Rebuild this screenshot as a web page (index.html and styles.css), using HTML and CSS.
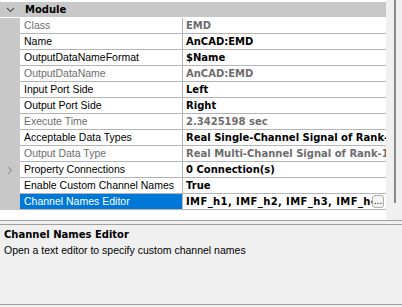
FILE: index.html
```html
<!DOCTYPE html>
<html>
<head>
<meta charset="utf-8">
<link rel="stylesheet" href="styles.css">
</head>
<body>
<div class="pg">
  <div class="top">
    <div class="grid">
      <div class="cat">
        <span class="margin"><svg class="chev" width="9" height="6" viewBox="0 0 9 6"><path d="M1 1 L4.5 4.5 L8 1" fill="none" stroke="#5a5a5a" stroke-width="1.2"/></svg></span>
        <span class="catname">Module</span>
      </div>
      <div class="row"><span class="margin"></span><span class="name dis">Class</span><span class="val dis">EMD</span></div>
      <div class="row"><span class="margin"></span><span class="name">Name</span><span class="val">AnCAD:EMD</span></div>
      <div class="row"><span class="margin"></span><span class="name">OutputDataNameFormat</span><span class="val">$Name</span></div>
      <div class="row"><span class="margin"></span><span class="name dis">OutputDataName</span><span class="val dis">AnCAD:EMD</span></div>
      <div class="row"><span class="margin"></span><span class="name">Input Port Side</span><span class="val">Left</span></div>
      <div class="row"><span class="margin"></span><span class="name">Output Port Side</span><span class="val">Right</span></div>
      <div class="row"><span class="margin"></span><span class="name dis">Execute Time</span><span class="val dis">2.3425198 sec</span></div>
      <div class="row"><span class="margin"></span><span class="name">Acceptable Data Types</span><span class="val">Real Single-Channel Signal of Rank-1</span></div>
      <div class="row"><span class="margin"></span><span class="name dis">Output Data Type</span><span class="val dis">Real Multi-Channel Signal of Rank-1</span></div>
      <div class="row"><span class="margin"><svg class="chev" width="6" height="9" viewBox="0 0 6 9"><path d="M1 1 L4.5 4.5 L1 8" fill="none" stroke="#9a9a9a" stroke-width="1.2"/></svg></span><span class="name">Property Connections</span><span class="val">0 Connection(s)</span></div>
      <div class="row"><span class="margin"></span><span class="name">Enable Custom Channel Names</span><span class="val">True</span></div>
      <div class="row"><span class="margin"></span><span class="name sel">Channel Names Editor</span><span class="val"><span class="clip">IMF_h1, IMF_h2, IMF_h3, IMF_h4, IMF_h5</span><span class="dots">...</span></span></div>
    </div>
    <div class="vscroll"><div class="thumb"></div></div>
  </div>
  <div class="split"></div>
  <div class="desc">
    <div class="dtitle">Channel Names Editor</div>
    <div class="dtext">Open a text editor to specify custom channel names</div>
  </div>
</div>
</body>
</html>
```
FILE: styles.css
```css
html, body {
  margin: 0;
  padding: 0;
}
body {
  width: 402px;
  height: 307px;
  overflow: hidden;
  background: #f0f0f0;
  font-family: "Liberation Sans", Arial, sans-serif;
  font-size: 10.5px;
  color: #000;
}
.pg {
  display: flex;
  flex-direction: column;
  height: 307px;
}
.top {
  display: flex;
  height: 220px;
  border-bottom: 1px solid #a0a0a0;
}
.grid {
  width: 386px;
  background: #fff;
  padding-top: 2px;
  display: flex;
  flex-direction: column;
}
.cat {
  display: flex;
  height: 16px;
  box-sizing: border-box;
  border-bottom: 1px solid #fff;
  background: #c8c8c8;
  align-items: center;
}
.catname,
.val,
.dtitle {
  font-family: "DejaVu Sans", Verdana, sans-serif;
  font-weight: bold;
  font-size: 10px;
}
.catname {
  padding-left: 5px;
  line-height: 15px;
}
.margin {
  width: 20px;
  flex: none;
  align-self: stretch;
  display: flex;
  align-items: center;
  justify-content: center;
  background: #c8c8c8;
}
.row {
  display: flex;
  height: 16px;
  box-sizing: border-box;
}
.row .name {
  width: 163px;
  flex: none;
  box-sizing: border-box;
  padding-left: 4px;
  border-bottom: 1px solid #b4b4b4;
  border-right: 1px solid #b4b4b4;
  line-height: 15px;
  white-space: nowrap;
  overflow: hidden;
}
.row .val {
  flex: 1;
  min-width: 0;
  box-sizing: border-box;
  padding-left: 3px;
  border-bottom: 1px solid #b4b4b4;
  line-height: 15px;
  white-space: nowrap;
  overflow: hidden;
  display: flex;
  align-items: center;
}
.dis {
  color: #6d6d6d;
}
.row .name.sel {
  background: #0078d7;
  color: #fff;
}
.clip {
  flex: 1;
  min-width: 0;
  overflow: hidden;
  letter-spacing: 0.4px;
}
.dots {
  flex: none;
  width: 12px;
  height: 13px;
  box-sizing: border-box;
  border: 1px solid #adadad;
  border-radius: 3px;
  background: #f4f4f4;
  font-family: "Liberation Sans", Arial, sans-serif;
  font-weight: normal;
  font-size: 10px;
  line-height: 9px;
  text-align: center;
  margin-right: 2px;
}
.vscroll {
  width: 16px;
  background: #f0f0f0;
  display: flex;
  justify-content: center;
}
.thumb {
  width: 2px;
  height: 203px;
  background: #8a8a8a;
  margin-left: 1px;
}
.split {
  height: 3px;
  border-bottom: 1px solid #a0a0a0;
}
.desc {
  height: 77px;
  border-bottom: 1px solid #a0a0a0;
  padding: 2px 4px 0;
}
.dtitle {
  line-height: 16px;
}
.dtext {
  line-height: 15px;
}
```
